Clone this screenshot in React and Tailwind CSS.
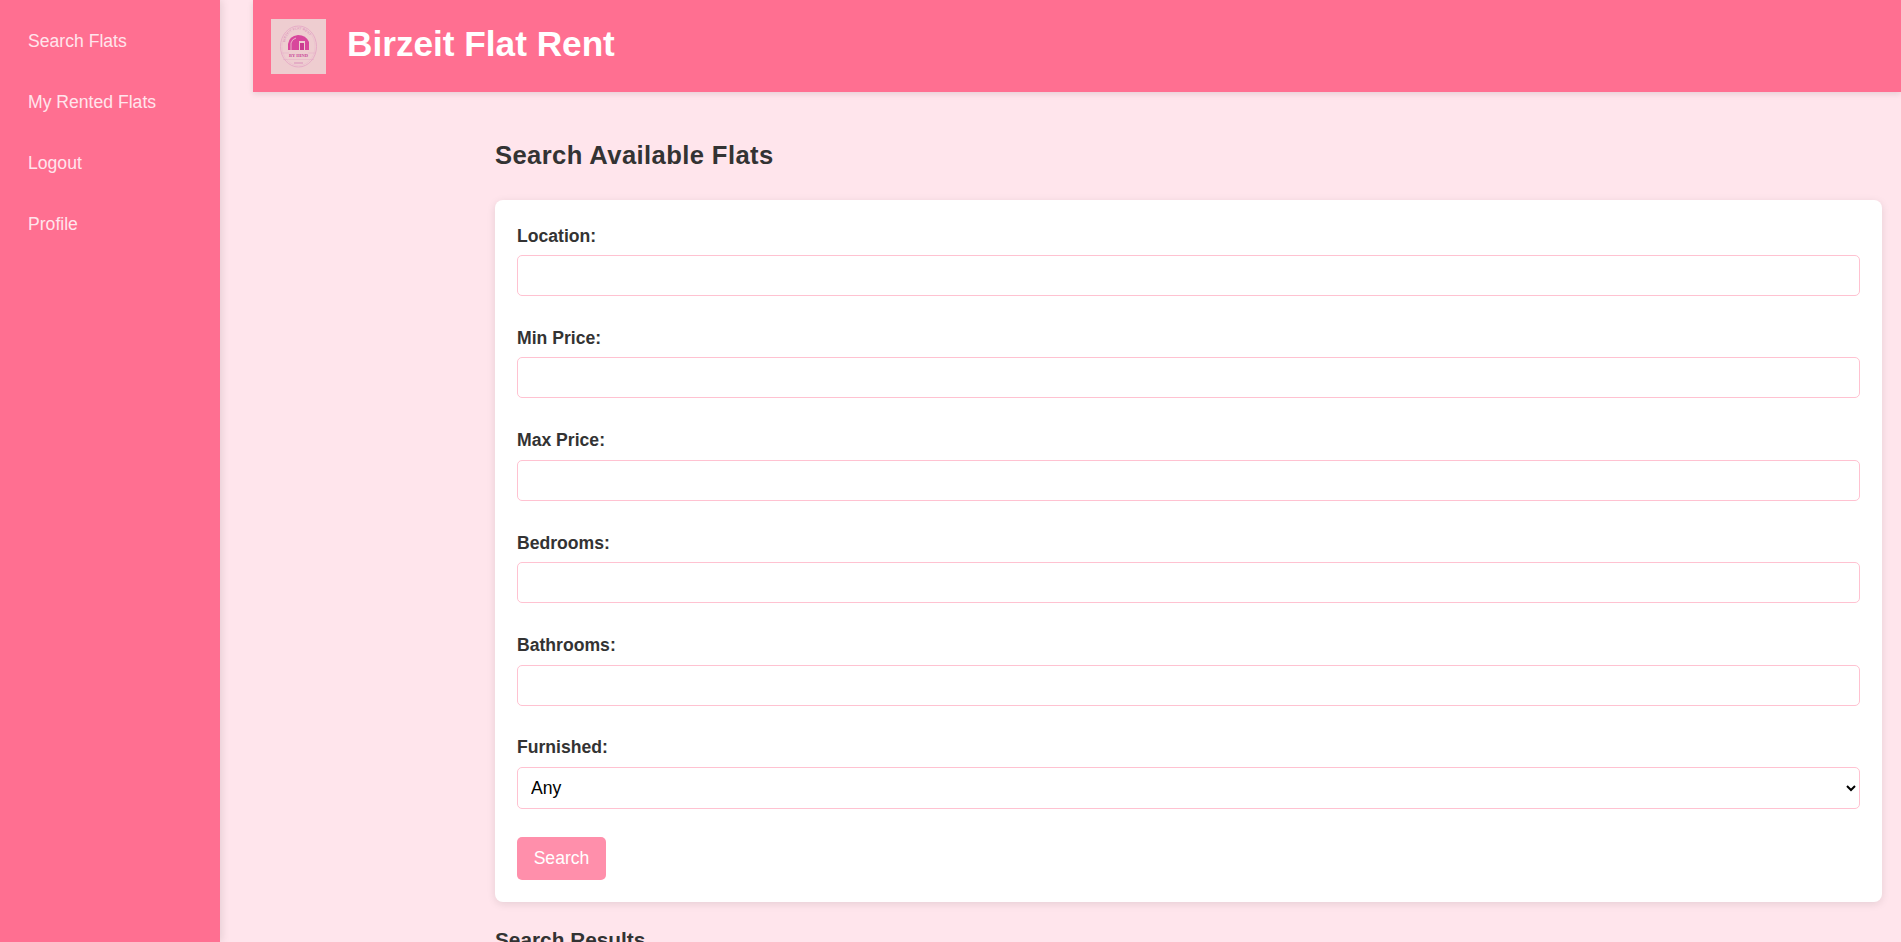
import React from 'react';

const navLinks = ['Search Flats', 'My Rented Flats', 'Logout', 'Profile'];
const fields = ['Location', 'Min Price', 'Max Price', 'Bedrooms', 'Bathrooms'];

function Logo() {
  return (
    <div className="w-[55px] h-[55px] bg-[#eecdd0] flex items-center justify-center shrink-0">
      <svg width="55" height="55" viewBox="0 0 55 55">
        <defs>
          <path id="logo-arc" d="M14 25 A13.5 14.5 0 0 1 41 25" />
        </defs>
        <ellipse cx="27.5" cy="27.5" rx="18" ry="20.5" fill="none" stroke="#e3a3c4" strokeWidth="0.8" />
        <ellipse cx="27.5" cy="27.5" rx="16.5" ry="19" fill="none" stroke="#e8b4cd" strokeWidth="0.4" />
        <text fontSize="3" fill="#d77fb4" fontFamily="Liberation Sans, sans-serif" letterSpacing="0.3">
          <textPath href="#logo-arc" startOffset="4%">BIRZEIT FLAT RENT</textPath>
        </text>
        <path d="M17 31 V25 Q18 17 27 16 Q35 16 38 23 V31 Z" fill="#d8479c" />
        <path d="M20 31V24Q21 20 25 19" fill="none" stroke="#eecdd0" strokeWidth="0.8" />
        <path d="M28 31V22H34V31" fill="#eecdd0" />
        <rect x="29" y="24" width="4" height="7" fill="#c93c90" />
        <text x="27.5" y="38" textAnchor="middle" fontSize="4.5" fontWeight="bold" fill="#c9489a" fontFamily="Liberation Serif, serif">BY HIND</text>
        <path d="M11 34H18M37 34H44M12 40.5H43" stroke="#e3a3c4" strokeWidth="0.4" />
        <path d="M23 44H32" stroke="#da8fbb" strokeWidth="1" />
      </svg>
    </div>
  );
}

export default function App() {
  return (
    <div className="h-screen overflow-hidden flex bg-[#ffe5ec] text-[#333] font-['Liberation_Sans',Arial,sans-serif]">
      <aside className="w-[220px] shrink-0 bg-[#ff6f91] shadow-[2px_0_8px_rgba(0,0,0,0.1)] pt-[31px] pl-[28px] flex flex-col gap-[40px]">
        {navLinks.map(link => (
          <a key={link} className="text-[17.6px] leading-[21px] text-[#ffe5ec]">{link}</a>
        ))}
      </aside>

      <div className="flex-1 min-w-0 ml-[33px]">
        <header className="h-[92px] bg-[#ff6f91] shadow-[0_2px_6px_rgba(0,0,0,0.1)] flex items-center pl-[18px] gap-[21px]">
          <Logo />
          <h1 className="text-[35.2px] leading-[40px] mb-[4px] font-bold text-white">Birzeit Flat Rent</h1>
        </header>

        <main className="ml-[242px] mr-[19px] pt-[48px]">
          <h2 className="text-[25.6px] leading-[30px] tracking-[0.4px] font-bold text-[#333] mb-[30px]">Search Available Flats</h2>

          <form className="bg-white rounded-[8px] shadow-[0_2px_8px_rgba(0,0,0,0.1)] p-[22px] pt-[25.5px]">
            {fields.map(field => (
              <div key={field} className="mb-[31.9px]">
                <label className="block text-[17.6px] leading-[20px] font-bold mb-[9.5px]">{field}:</label>
                <input className="block w-full h-[41px] bg-white border border-[#ffc2d1] rounded-[5px]" />
              </div>
            ))}
            <div className="mb-[28px]">
              <label className="block text-[17.6px] leading-[20px] font-bold mb-[9.5px]">Furnished:</label>
              <select className="block w-full h-[42px] pl-[9px] bg-white border border-[#ffc2d1] rounded-[5px] text-[17.6px] text-black">
                <option>Any</option>
              </select>
            </div>
            <button type="button" className="block w-[89px] h-[43px] bg-[#ff8fab] text-white text-[17.6px] rounded-[5px]">Search</button>
          </form>

          <h3 className="text-[20.8px] leading-[24px] font-bold mt-[26px]">Search Results</h3>
        </main>
      </div>
    </div>
  );
}
